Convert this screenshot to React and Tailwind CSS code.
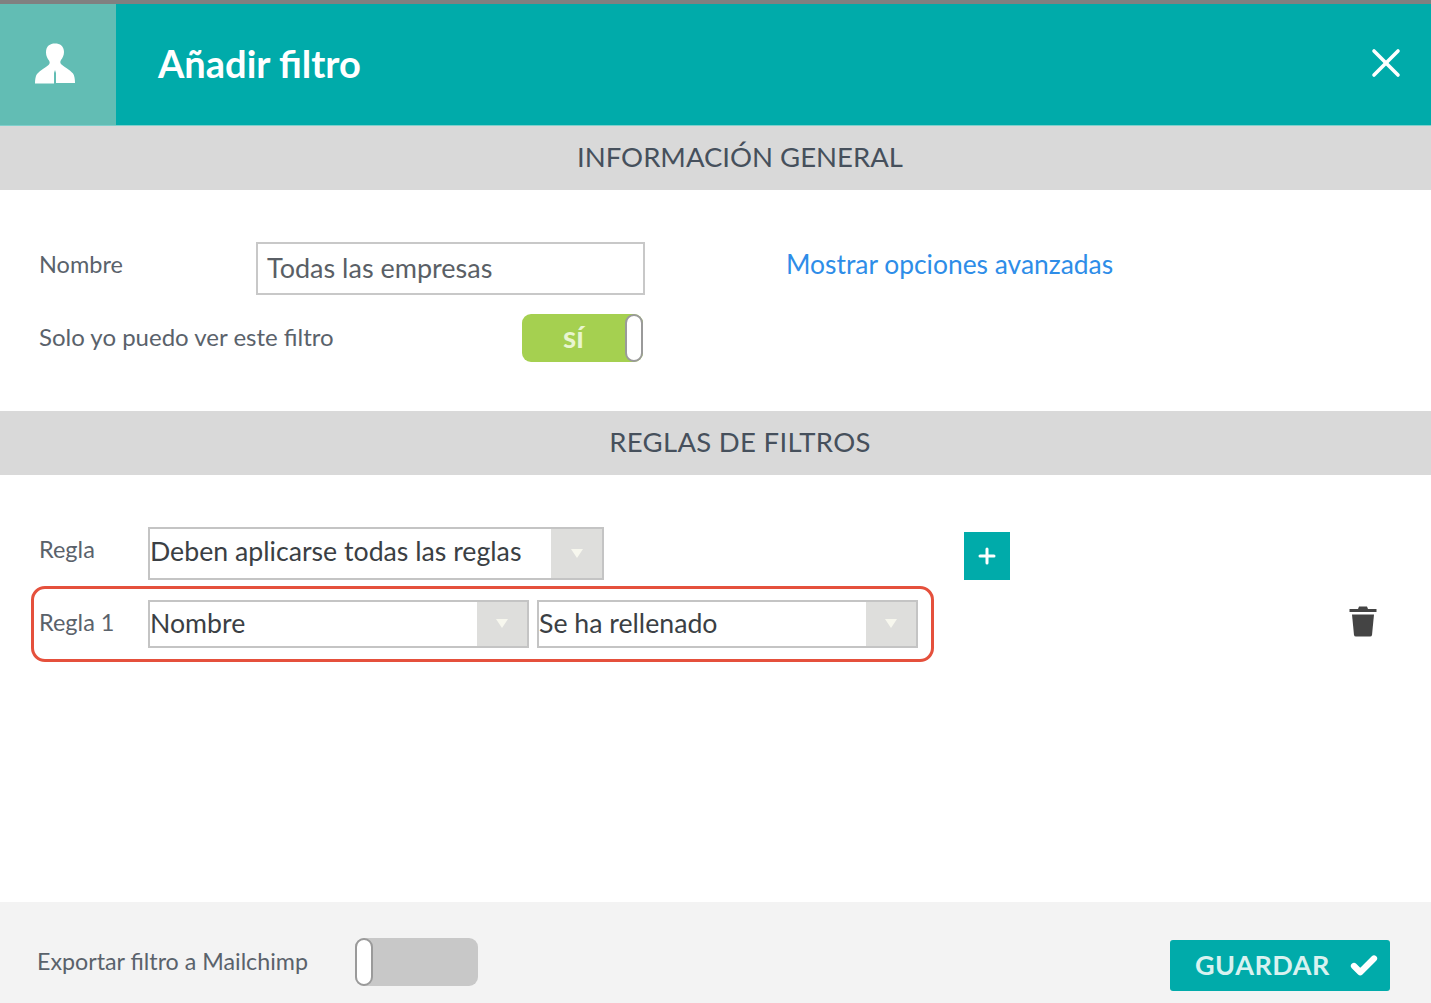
import { X, Plus, Check } from 'lucide-react'

const font = { fontFamily: 'Lato, "Open Sans", sans-serif' }

const SectionBar = ({ title, className }) => (
  <div className={`h-[64px] bg-[#d9d9d9] flex items-center justify-center pl-[49px] pb-[2px] text-[27.5px] text-[#46505c] ${className}`}>
    {title}
  </div>
)

const Toggle = ({ on, className }) => (
  <div
    className={`h-[48px] rounded-[9px] flex items-stretch ${className} ${
      on ? 'bg-[#a5d050] justify-end' : 'bg-[#c8c8c8] justify-start'
    }`}
  >
    {on && (
      <span className="flex-1 flex items-center justify-center pb-[4px] text-[30px] font-bold text-[#e9f5d0]">
        sí
      </span>
    )}
    <span className="w-[18px] rounded-[9px] bg-white border-2 border-[#9a9a9a]" />
  </div>
)

const Select = ({ value, className, arrow, textClass }) => (
  <div className={`flex border-2 border-[#c4c4c4] bg-white ${className}`}>
    <span className={`flex-1 flex items-center text-[26.7px] text-[#3b3f44] whitespace-nowrap ${textClass}`}>
      {value}
    </span>
    <span className={`bg-[#dededc] flex items-center justify-center ${arrow}`}>
      <span className="w-0 h-0 border-l-[6px] border-r-[6px] border-t-[9px] border-l-transparent border-r-transparent border-t-[#f7f7ee]" />
    </span>
  </div>
)

export default function App() {
  return (
    <div className="w-[1431px] h-[1003px] overflow-hidden bg-white flex flex-col" style={font}>
      <div className="h-[4px] bg-[#808080]" />

      <div className="h-[122px] bg-[#00abaa] flex items-center border-b border-[#7fd0cc]">
        <div className="w-[116px] h-full bg-[#62bdb4] flex items-center justify-center pb-[2px] pr-[7px]">
          <svg width="42" height="41" viewBox="0 0 42 41" fill="#fff">
            <path d="M21 .5c5 0 9 2.500 9 8.500 0 3.500-1.500 6-3 8-1 1.500-1 3 .5 4.500 3 2.500 8 5 11.500 9 1.500 2 2 6 2 9.500H22V30l-1-3-1 3v10.500H1c0-3.500.5-7.500 2-9.500 3.500-4 8.500-6.500 11.500-9 1.500-1.500 1.500-3 .5-4.500-1.500-2-3-4.500-3-8C12 3 16 .5 21 .5z" />
          </svg>
        </div>
        <h1 className="ml-[42px] pb-[2px] text-[38px] font-bold text-white">Añadir filtro</h1>
        <X className="ml-auto mr-[21px] mb-[4px] text-white" size={48} strokeWidth={1.8} />
      </div>

      <SectionBar title="INFORMACIÓN GENERAL" />

      <div className="h-[221px] pl-[39px] pt-[52px] text-[#5a626b] text-[23.5px]">
        <div className="flex items-center">
          <span className="w-[217px] pb-[7px]">Nombre</span>
          <div className="w-[389px] h-[53px] border-2 border-[#c8c8c8] flex items-center pl-[9px] text-[27px] text-[#5a5f66]">
            Todas las empresas
          </div>
          <a className="ml-[141px] pb-[8px] text-[26.4px] text-[#2e8de8]">Mostrar opciones avanzadas</a>
        </div>
        <div className="flex items-center mt-[19px]">
          <span className="w-[483px] pb-[2px] text-[24px]">Solo yo puedo ver este filtro</span>
          <Toggle on className="w-[121px]" />
        </div>
      </div>

      <SectionBar title="REGLAS DE FILTROS" className="tracking-[0.3px]" />

      <div className="flex-1 text-[#5a626b] text-[23.5px]">
        <div className="flex items-center pl-[39px] pt-[52px]">
          <span className="w-[109px] pb-[8px]">Regla</span>
          <Select
            value="Deben aplicarse todas las reglas"
            className="w-[456px] h-[53px]"
            arrow="w-[51px]"
            textClass="pb-[4px]"
          />
          <div className="ml-[360px] mt-[5px] w-[46px] h-[48px] bg-[#00abaa] flex items-center justify-center">
            <Plus className="text-white" size={24} strokeWidth={3} />
          </div>
        </div>

        <div className="flex items-center mt-[6px]">
          <div className="ml-[31px] w-[903px] h-[76px] border-[3px] border-[#e5503c] rounded-[14px] flex items-center pl-[5px] pb-[1px]">
            <span className="w-[109px] pb-[2px]">Regla 1</span>
            <Select value="Nombre" className="w-[381px] h-[48px]" arrow="w-[50px]" />
            <Select value="Se ha rellenado" className="w-[381px] h-[48px] ml-[8px]" arrow="w-[50px]" />
          </div>
          <svg className="ml-[414px] mb-[7px]" width="30" height="32" viewBox="0 0 30 32" fill="#444">
            <path d="M11 1.500h8l1 2.500h8.500v3H1.500V4H10z" />
            <path d="M4 9.500h22l-2 20.500q-.2 1.500-2 1.500H8q-1.800 0-2-1.500z" />
          </svg>
        </div>
      </div>

      <div className="h-[101px] bg-[#f3f3f3] flex items-center pt-[18px] pl-[37px] pr-[41px] text-[23.25px] text-[#5a626b]">
        <span className="w-[318px]">Exportar filtro a Mailchimp</span>
        <Toggle className="w-[123px]" />
        <button className="ml-auto mt-[8px] w-[220px] h-[51px] rounded-[3px] bg-[#00abaa] flex items-center pl-[25px] gap-[19px] text-[27px] font-bold text-[#d8f2f0] tracking-[0.5px]">
          GUARDAR
          <Check className="text-white" size={30} strokeWidth={5} />
        </button>
      </div>
    </div>
  )
}
